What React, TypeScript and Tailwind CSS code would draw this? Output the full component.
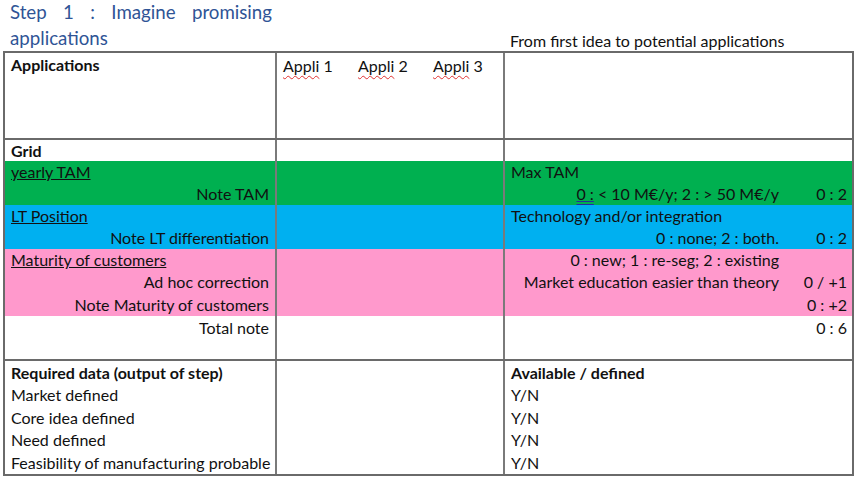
import React from "react";

const font = { fontFamily: "Lato, 'Open Sans', Arial, sans-serif" };

function Row({
  bg = "",
  h = "h-[22px]",
  c1,
  c1Right = false,
  c2 = null,
  c3 = null,
}: {
  bg?: string;
  h?: string;
  c1?: React.ReactNode;
  c1Right?: boolean;
  c2?: React.ReactNode;
  c3?: React.ReactNode;
}) {
  return (
    <div className={`flex ${h} ${bg}`}>
      <div
        className={`w-[272px] flex items-center whitespace-nowrap px-[6px] border-r-2 border-[#7a7a7a] ${
          c1Right ? "justify-end" : "justify-start"
        }`}
      >
        {c1}
      </div>
      <div className="w-[228px] flex items-center px-[6px] border-r-2 border-[#7a7a7a]">{c2}</div>
      <div className="flex-1 flex items-center whitespace-nowrap pl-[6px] pr-[5px]">{c3}</div>
    </div>
  );
}

function Split({ mid, score, left = false }: { mid?: React.ReactNode; score?: React.ReactNode; left?: boolean }) {
  return (
    <div className="flex w-full items-center">
      <div className={`flex-1 whitespace-nowrap ${left ? "text-left" : "text-right"}`}>{mid}</div>
      <div className="w-[68px] text-right whitespace-nowrap">{score}</div>
    </div>
  );
}

export default function App() {
  return (
    <div className="w-[860px] h-[484px] bg-white text-[16px] leading-[20px] text-[#111] overflow-hidden" style={font}>
      <div className="flex h-[51px]">
        <div className="w-[276px] pl-[10px] pr-[4px] -mt-[1px]">
          <div className="text-[18.7px] leading-[26px] text-[#2F5496] text-justify">
            Step 1 : Imagine promising applications
          </div>
        </div>
        <div className="flex items-end pl-[234px] pb-[1px] leading-[18px] whitespace-nowrap">
          From first idea to potential applications
        </div>
      </div>
      <div className="ml-[3px] w-[851px] border-2 border-[#6a6a6a]">
        <div className="flex h-[87px] border-b-2 border-[#6a6a6a]">
          <div className="w-[272px] px-[6px] pt-[2px] font-bold border-r-2 border-[#7a7a7a]">Applications</div>
          <div className="w-[228px] pl-[6px] pt-[3px] flex border-r-2 border-[#7a7a7a]">
            {["Appli 1", "Appli 2", "Appli 3"].map((t) => (
              <span key={t} className="w-[75px] shrink-0 whitespace-nowrap">
                <span className="underline decoration-wavy decoration-[#e03030] decoration-1 underline-offset-[3px]">
                  {t.split(" ")[0]}
                </span>{" "}
                {t.split(" ")[1]}
              </span>
            ))}
          </div>
          <div className="flex-1" />
        </div>
        <Row h="h-[21px]" c1={<span className="font-bold">Grid</span>} />
        <Row bg="bg-[#00B050]" c1={<span className="underline">yearly TAM</span>} c3={<span>Max TAM</span>} />
        <Row
          bg="bg-[#00B050]"
          c1Right
          c1="Note TAM"
          c3={
            <Split
              mid={
                <span>
                  <span className="underline decoration-double decoration-[#2a2aa0]">0 :</span> &lt; 10 M€/y; 2 : &gt; 50 M€/y
                </span>
              }
              score="0 : 2"
            />
          }
        />
        <Row
          bg="bg-[#00B0F0]"
          h="h-[22px]"
          c1={<span className="underline">LT Position</span>}
          c3={<span>Technology and/or integration</span>}
        />
        <Row
          bg="bg-[#00B0F0]"
          c1Right
          c1="Note LT differentiation"
          c3={<Split mid="0 : none; 2 : both." score="0 : 2" />}
        />
        <Row
          bg="bg-[#FF99CC]"
          c1={<span className="underline">Maturity of customers</span>}
          c3={<Split mid="0 : new; 1 : re-seg; 2 : existing" />}
        />
        <Row
          bg="bg-[#FF99CC]"
          c1Right
          c1="Ad hoc correction"
          c3={<Split mid="Market education easier than theory" score="0 / +1" />}
        />
        <Row bg="bg-[#FF99CC]" h="h-[23px]" c1Right c1="Note Maturity of customers" c3={<Split score="0 : +2" />} />
        <Row h="h-[23px]" c1Right c1="Total note" c3={<Split score="0 : 6" />} />
        <div className="flex h-[22px] border-b-2 border-[#6a6a6a]">
          <div className="w-[272px] border-r-2 border-[#7a7a7a]" />
          <div className="w-[228px] border-r-2 border-[#7a7a7a]" />
          <div className="flex-1" />
        </div>
        <Row h="h-[23px]" c1={<span className="font-bold">Required data (output of step)</span>} c3={<span className="font-bold">Available / defined</span>} />
        <Row c1="Market defined" c3="Y/N" />
        <Row h="h-[23px]" c1="Core idea defined" c3="Y/N" />
        <Row c1="Need defined" c3="Y/N" />
        <Row h="h-[23px]" c1="Feasibility of manufacturing probable" c3="Y/N" />
      </div>
    </div>
  );
}
